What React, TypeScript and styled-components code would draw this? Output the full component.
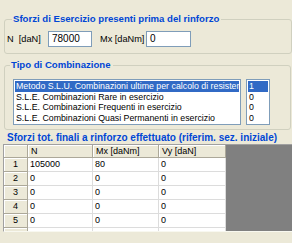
import React from "react";
import styled, { createGlobalStyle } from "styled-components";

const Global = createGlobalStyle`
  html, body { margin: 0; padding: 0; }
  body {
    background: #ece9d8;
    font-family: "Liberation Sans", Arial, sans-serif;
    width: 292px;
    height: 243px;
    overflow: hidden;
  }
`;

const Page = styled.div`
  width: 292px;
  height: 243px;
  display: flex;
  flex-direction: column;
  background: #ece9d8;
`;

const Group = styled.fieldset<{ $mt: number; $ml: number; $w: number; $h: number }>`
  margin: ${(p) => p.$mt}px 0 0 ${(p) => p.$ml}px;
  width: ${(p) => p.$w}px;
  height: ${(p) => p.$h}px;
  box-sizing: border-box;
  border: 1px solid #d0d0bf;
  border-radius: 3px;
  padding: 0;
  min-width: 0;
`;

const Legend = styled.legend<{ $ml: number }>`
  margin-left: ${(p) => p.$ml}px;
  padding: 0 2px 0 1px;
  color: #0046d5;
  font-weight: bold;
  font-size: 9.6px;
  line-height: 10px;
`;

const Title = styled.div`
  margin: 3px 0 0 7px;
  color: #0046d5;
  font-weight: bold;
  font-size: 10px;
  line-height: 10px;
  height: 10px;
  white-space: nowrap;
`;

const FieldRow = styled.div`
  display: flex;
  align-items: center;
  margin: 7px 0 0 2px;
  font-size: 9.2px;
  color: #000;
`;

const Label = styled.span<{ $w: number; $pl?: number }>`
  box-sizing: border-box;
  flex: none;
  width: ${(p) => p.$w}px;
  padding-left: ${(p) => p.$pl ?? 0}px;
  white-space: pre;
  overflow: visible;
`;

const Input = styled.div<{ $w: number }>`
  flex: none;
  width: ${(p) => p.$w}px;
  height: 16px;
  box-sizing: border-box;
  border: 1px solid #7f9db9;
  background: #fff;
  font-size: 10px;
  line-height: 14px;
  padding-left: 3px;
`;

const ListRow = styled.div`
  display: flex;
  margin: 9px 0 0 8px;
  gap: 5px;
`;

const ListBox = styled.div<{ $w: number }>`
  width: ${(p) => p.$w}px;
  height: 46px;
  box-sizing: border-box;
  border: 1px solid #7f9db9;
  background: #fff;
  padding: 1px;
  overflow: hidden;
`;

const ListItem = styled.div<{ $sel?: boolean }>`
  height: 10.5px;
  line-height: 10.5px;
  font-size: 8.8px;
  padding-left: 1px;
  white-space: nowrap;
  overflow: hidden;
  color: ${(p) => (p.$sel ? "#fff" : "#000")};
  background: ${(p) => (p.$sel ? "#316ac5" : "transparent")};
`;

const Grid = styled.div`
  margin: 1px 0 0 3px;
  width: 289px;
  height: 88px;
  box-sizing: border-box;
  background: #808080;
  border-top: 1px solid #a0a0a0;
  border-left: 1px solid #a0a0a0;
  border-bottom: 1px solid #f8f8f0;
  overflow: hidden;
  display: grid;
  grid-template-columns: 24px 65px 66px 67px;
  grid-auto-rows: 14px;
  grid-template-rows: 13px;
  align-content: start;
`;

const HeadCell = styled.div`
  background: #ece9d8;
  border-right: 1px solid #aca899;
  border-bottom: 1px solid #aca899;
  box-shadow: inset 1px 1px 0 #fff;
  font-size: 9px;
  line-height: 12px;
  padding-left: 3px;
  white-space: nowrap;
  overflow: hidden;
`;

const RowHead = styled(HeadCell)`
  text-align: center;
  padding-left: 0;
  line-height: 13px;
`;

const Cell = styled.div`
  background: #fff;
  border-right: 1px solid #dcdcdc;
  border-bottom: 1px solid #dcdcdc;
  font-size: 9px;
  line-height: 13px;
  padding-left: 2px;
  white-space: nowrap;
`;

const rows = [
  ["1", "105000", "80", "0"],
  ["2", "0", "0", "0"],
  ["3", "0", "0", "0"],
  ["4", "0", "0", "0"],
  ["5", "0", "0", "0"],
  ["6", "0", "0", "0"],
];

export default function App() {
  return (
    <Page>
      <Global />
      <Group $mt={14} $ml={4} $w={288} $h={40}>
        <Legend $ml={7}>Sforzi di Esercizio presenti prima del rinforzo</Legend>
        <FieldRow>
          <Label $w={41}>{"N  [daN]"}</Label>
          <Input $w={44}>78000</Input>
          <Label $w={54} $pl={8}>Mx [daNm]</Label>
          <Input $w={45}>0</Input>
        </FieldRow>
      </Group>
      <Group $mt={6} $ml={4} $w={287} $h={70}>
        <Legend $ml={5}>Tipo di Combinazione</Legend>
        <ListRow>
          <ListBox $w={228}>
            <ListItem $sel>Metodo S.L.U. Combinazioni ultime per calcolo di resistenza</ListItem>
            <ListItem>S.L.E. Combinazioni Rare in esercizio</ListItem>
            <ListItem>S.L.E. Combinazioni Frequenti in esercizio</ListItem>
            <ListItem>S.L.E. Combinazioni Quasi Permanenti in esercizio</ListItem>
          </ListBox>
          <ListBox $w={24}>
            <ListItem $sel>1</ListItem>
            <ListItem>0</ListItem>
            <ListItem>0</ListItem>
            <ListItem>0</ListItem>
          </ListBox>
        </ListRow>
      </Group>
      <Title>Sforzi tot. finali a rinforzo effettuato (riferim. sez. iniziale)</Title>
      <Grid>
        <HeadCell />
        <HeadCell>N</HeadCell>
        <HeadCell>Mx [daNm]</HeadCell>
        <HeadCell>Vy [daN]</HeadCell>
        {rows.map((r) => (
          <React.Fragment key={r[0]}>
            <RowHead>{r[0]}</RowHead>
            <Cell>{r[1]}</Cell>
            <Cell>{r[2]}</Cell>
            <Cell>{r[3]}</Cell>
          </React.Fragment>
        ))}
      </Grid>
    </Page>
  );
}
